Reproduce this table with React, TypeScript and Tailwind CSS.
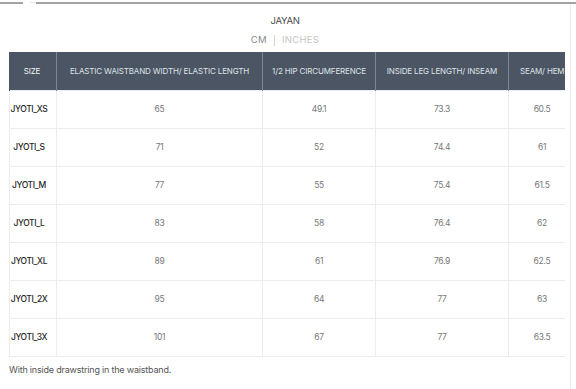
import React from "react";

const rows: [string, string, string, string, string][] = [
  ["JYOTI_XS", "65", "49.1", "73.3", "60.5"],
  ["JYOTI_S", "71", "52", "74.4", "61"],
  ["JYOTI_M", "77", "55", "75.4", "61.5"],
  ["JYOTI_L", "83", "58", "76.4", "62"],
  ["JYOTI_XL", "89", "61", "76.9", "62.5"],
  ["JYOTI_2X", "95", "64", "77", "63"],
  ["JYOTI_3X", "101", "67", "77", "63.5"],
];

const headers = [
  "SIZE",
  "ELASTIC WAISTBAND WIDTH/ ELASTIC LENGTH",
  "1/2 HIP CIRCUMFERENCE",
  "INSIDE LEG LENGTH/ INSEAM",
  "SEAM/ HEM",
];

const App: React.FC = () => {
  return (
    <div
      className="w-[576px] h-[389px] bg-white overflow-hidden flex flex-col"
      style={{ fontFamily: "Inter, 'Liberation Sans', sans-serif" }}
    >
      <div className="flex items-center h-[4px] pt-[1px] shrink-0">
        <div className="w-[23px] h-[2px] bg-[#a3a3a3]" />
        <div className="w-[7px]" />
        <div className="w-[6px] h-[1px] bg-[#e5e5e5]" />
        <div className="flex-1 h-[2px] bg-[#a3a3a3]" />
      </div>
      <div className="w-[571px] flex-1 border-r border-[#ececec] flex flex-col">
        <div className="pt-[10px] text-center text-[9.5px] leading-[14px] text-[#4a4a4a] tracking-[-0.3px]">
          JAYAN
        </div>
        <div className="mt-[6px] flex justify-center items-center gap-[7px] text-[9.5px] leading-[12px] tracking-[0.3px]">
          <span className="text-[#8a8a8a]">CM</span>
          <span className="w-px h-[11px] bg-[#d6d6d6]" />
          <span className="text-[#c4c4c4]">INCHES</span>
        </div>
        <div className="mt-[6px] ml-[9px] w-[556px] overflow-hidden">
          <table className="table-fixed border-collapse w-[566px]">
            <colgroup>
              <col className="w-[47px]" />
              <col className="w-[206px]" />
              <col className="w-[113px]" />
              <col className="w-[133px]" />
              <col className="w-[67px]" />
            </colgroup>
            <thead>
              <tr className="h-[38px] bg-[#4b5563]">
                {headers.map((h, i) => (
                  <th
                    key={h}
                    className={`font-normal text-[8px] tracking-[-0.15px] text-[#dfe3e8] whitespace-nowrap overflow-hidden border-l border-[#7c8796] first:border-l-[#4b5563] ${
                      i === 0 ? "text-[#f3f4f6] font-medium pr-[2px]" : ""
                    } ${i === 4 ? "text-left pl-[11px]" : ""}`}
                  >
                    {h}
                  </th>
                ))}
              </tr>
            </thead>
            <tbody>
              {rows.map((r) => (
                <tr key={r[0]} className="h-[38px]">
                  {r.map((c, i) => (
                    <td
                      key={i}
                      className={`border border-[#ececec] text-center whitespace-nowrap ${
                        i === 0
                          ? "text-[8.5px] tracking-[-0.4px] text-[#262626] font-medium pr-[8px]"
                          : "text-[8.5px] tracking-[-0.3px] text-[#777]"
                      }`}
                    >
                      {c}
                    </td>
                  ))}
                </tr>
              ))}
            </tbody>
          </table>
        </div>
        <div className="ml-[9px] mt-[6px] text-[9px] text-[#555] tracking-[-0.2px]">
          With inside drawstring in the waistband.
        </div>
      </div>
    </div>
  );
};

export default App;
